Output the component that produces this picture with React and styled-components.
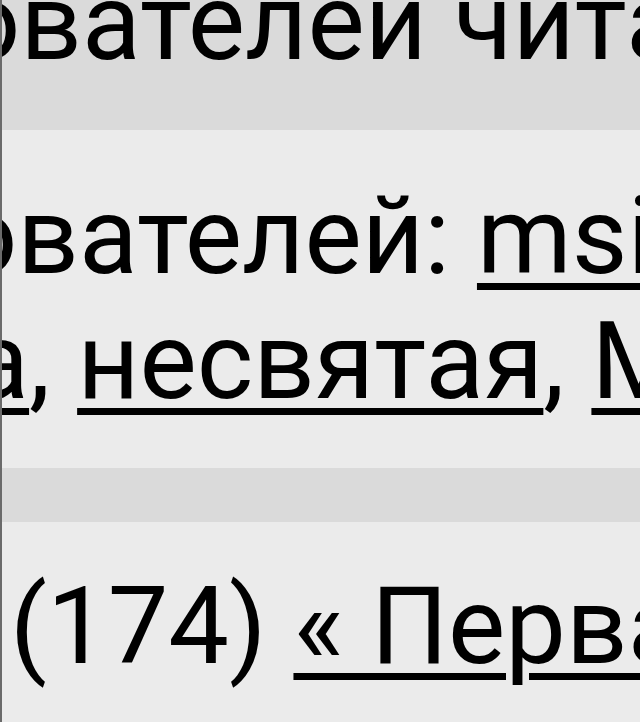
import styled, { createGlobalStyle } from 'styled-components';

const GlobalStyle = createGlobalStyle`
  html, body {
    margin: 0;
    padding: 0;
    background: #ebebeb;
  }
`;

const App = () => (
  <>
    <GlobalStyle />
    <Page>
      <Row $bg="#dadada" $height={130} $pad={0}>
        <Line $shift={-357} $lift={40}>Пользователей читают эту тему</Line>
      </Row>
      <Row $bg="#ebebeb" $height={338} $pad={44}>
        <Line $shift={-360}>
          Пользователей: <UserLink href="#">msi</UserLink>
        </Line>
        <Line $shift={-227}>
          <UserLink href="#">Лиса</UserLink>, <UserLink href="#">несвятая</UserLink>, <UserLink href="#">Мира</UserLink>
        </Line>
      </Row>
      <Row $bg="#dadada" $height={54} $pad={0} />
      <Row $bg="#ebebeb" $height={200} $pad={42}>
        <Line $shift={8}>
          (174) <UserLink href="#">« Первая</UserLink> <UserLink href="#">‹</UserLink>
        </Line>
      </Row>
    </Page>
  </>
);

const Page = styled.div`
  width: 640px;
  height: 722px;
  overflow: hidden;
  border-left: 2px solid #6a6a6a;
  box-sizing: border-box;
  font-family: Roboto, "Noto Sans", sans-serif;
  font-size: 108px;
  line-height: 125px;
  color: #000;
`;

const Row = styled.div`
  height: ${(p) => p.$height}px;
  padding-top: ${(p) => p.$pad}px;
  box-sizing: border-box;
  background: ${(p) => p.$bg};
  overflow: hidden;
`;

const Line = styled.div`
  margin-left: ${(p) => p.$shift}px;
  margin-top: ${(p) => -(p.$lift || 0)}px;
  white-space: nowrap;
`;

const UserLink = styled.a`
  color: #000;
  text-decoration: underline;
  text-decoration-thickness: 7px;
  text-underline-offset: 10px;
`;

export default App;
